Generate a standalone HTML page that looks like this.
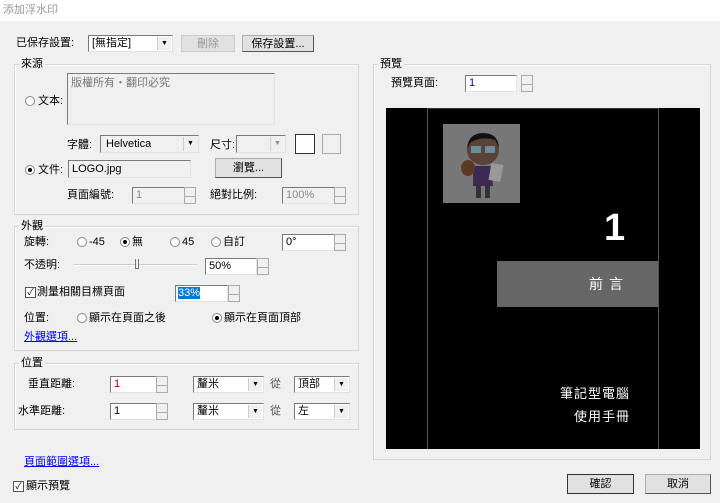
<!DOCTYPE html>
<html><head><meta charset="utf-8"><style>
*{box-sizing:border-box;margin:0;padding:0}
body{width:720px;height:503px;background:#f0f0f0;position:relative;overflow:hidden;font-family:"Liberation Sans","Noto Sans CJK TC",sans-serif;font-size:11px;color:#000}
.a{position:absolute;white-space:nowrap}
.t{position:absolute;white-space:nowrap;line-height:12px}
.grp{position:absolute;border:1px solid #d5d5d5;box-shadow:inset 1px 1px 0 #fff}
.gl{position:absolute;background:#f0f0f0;padding:0 2px;line-height:12px;top:-7px;left:4px}
.inp{position:absolute;background:#fff;border:1px solid #7a7a7a;border-right-color:#e3e3e3;border-bottom-color:#e3e3e3;padding-left:3px;line-height:14px}
.dis{background:#f0f0f0;color:#888}
.btn{position:absolute;background:#e1e1e1;border:1px solid #adadad;border-right-color:#555;border-bottom-color:#555;text-align:center;line-height:16px}
.sp{position:absolute;width:12px;border:1px solid #aaa;background:#f0f0f0}
.sp:after{content:"";position:absolute;left:0;right:0;top:50%;border-top:1px solid #aaa}
.dd{position:absolute;top:1px;right:1px;bottom:1px;width:14px;background:#f0f0f0;border-left:1px solid #ccc;font-size:7px;text-align:center;line-height:14px}
.rad{position:absolute;width:10px;height:10px;border-radius:50%;border:1px solid #888;background:#fff}
.rad.on:after{content:"";position:absolute;left:2px;top:2px;width:4px;height:4px;border-radius:50%;background:#000}
.chk{position:absolute;width:11px;height:11px;border:1px solid #555;background:#fff;font-size:9px;line-height:9px;text-align:center}
.lnk{color:#00f;text-decoration:underline}
</style></head><body>
<div class="a" style="left:0;top:0;width:720px;height:21px;background:#fff"></div>
<div class="t" style="left:3px;top:4px;color:#999">添加浮水印</div>

<div class="t" style="left:16px;top:37px">已保存設置:</div>
<div class="inp" style="left:88px;top:35px;width:85px;height:17px">[無指定]<div class="dd">▼</div></div>
<div class="btn" style="left:181px;top:35px;width:54px;height:17px;color:#999;border-color:#ccc">刪除</div>
<div class="btn" style="left:242px;top:35px;width:72px;height:17px">保存設置...</div>

<div class="grp" style="left:14px;top:64px;width:345px;height:151px"><div class="gl">來源</div></div>
<div class="rad" style="left:25px;top:96px"></div><div class="t" style="left:38px;top:95px">文本:</div>
<div class="inp dis" style="left:67px;top:73px;width:208px;height:52px;color:#777;padding-top:2px">版權所有・翻印必究</div>
<div class="t" style="left:67px;top:139px">字體:</div>
<div class="inp dis" style="left:100px;top:135px;width:99px;height:18px;color:#000;padding-left:5px;line-height:16px">Helvetica<div class="dd">▼</div></div>
<div class="t" style="left:210px;top:139px">尺寸:</div>
<div class="inp dis" style="left:236px;top:135px;width:50px;height:18px"><div class="dd">▼</div></div>
<div class="a" style="left:295px;top:134px;width:20px;height:20px;background:#fff;border:1px solid #333"></div>
<div class="a" style="left:322px;top:134px;width:19px;height:20px;border:1px solid #aaa"></div>
<div class="rad on" style="left:25px;top:165px"></div><div class="t" style="left:38px;top:164px">文件:</div>
<div class="inp dis" style="left:68px;top:160px;width:123px;height:18px;color:#000;line-height:16px">LOGO.jpg</div>
<div class="btn" style="left:215px;top:158px;width:67px;height:20px;line-height:18px">瀏覽...</div>
<div class="t" style="left:67px;top:189px">頁面編號:</div>
<div class="inp dis" style="left:132px;top:187px;width:53px;height:17px">1</div><div class="sp" style="left:184px;top:187px;height:17px"></div>
<div class="t" style="left:210px;top:189px">絕對比例:</div>
<div class="inp dis" style="left:282px;top:187px;width:53px;height:17px">100%</div><div class="sp" style="left:334px;top:187px;height:17px"></div>

<div class="grp" style="left:14px;top:226px;width:345px;height:125px"><div class="gl">外觀</div></div>
<div class="t" style="left:24px;top:236px">旋轉:</div>
<div class="rad" style="left:77px;top:237px"></div><div class="t" style="left:89px;top:236px">-45</div>
<div class="rad on" style="left:120px;top:237px"></div><div class="t" style="left:132px;top:236px">無</div>
<div class="rad" style="left:170px;top:237px"></div><div class="t" style="left:182px;top:236px">45</div>
<div class="rad" style="left:211px;top:237px"></div><div class="t" style="left:223px;top:236px">自訂</div>
<div class="inp" style="left:282px;top:234px;width:53px;height:17px">0°</div><div class="sp" style="left:334px;top:234px;height:17px"></div>
<div class="t" style="left:24px;top:259px">不透明:</div>
<div class="a" style="left:74px;top:264px;width:123px;height:2px;background:#ccc;border-bottom:1px solid #fff"></div>
<div class="a" style="left:135px;top:259px;width:4px;height:10px;background:#f0f0f0;border:1px solid #777;border-top:none"></div>
<div class="inp" style="left:205px;top:258px;width:52px;height:17px">50%</div><div class="sp" style="left:257px;top:258px;height:17px"></div>
<div class="chk" style="left:25px;top:287px">✓</div><div class="t" style="left:37px;top:286px">測量相關目標頁面</div>
<div class="inp" style="left:175px;top:285px;width:53px;height:17px;padding-left:2px"><span style="background:#0078d7;color:#fff">33%</span></div><div class="sp" style="left:228px;top:285px;height:17px"></div>
<div class="t" style="left:24px;top:312px">位置:</div>
<div class="rad" style="left:77px;top:313px"></div><div class="t" style="left:89px;top:312px">顯示在頁面之後</div>
<div class="rad on" style="left:212px;top:313px"></div><div class="t" style="left:224px;top:312px">顯示在頁面頂部</div>
<div class="t lnk" style="left:24px;top:331px">外觀選項...</div>

<div class="grp" style="left:14px;top:363px;width:345px;height:67px"><div class="gl">位置</div></div>
<div class="t" style="left:28px;top:378px">垂直距離:</div>
<div class="inp" style="left:110px;top:376px;width:47px;height:17px;color:#a00">1</div><div class="sp" style="left:156px;top:376px;height:17px"></div>
<div class="inp" style="left:193px;top:376px;width:71px;height:17px">釐米<div class="dd">▼</div></div>
<div class="t" style="left:270px;top:378px;color:#555">從</div>
<div class="inp" style="left:294px;top:376px;width:56px;height:17px">頂部<div class="dd">▼</div></div>
<div class="t" style="left:18px;top:405px">水準距離:</div>
<div class="inp" style="left:110px;top:403px;width:47px;height:17px">1</div><div class="sp" style="left:156px;top:403px;height:17px"></div>
<div class="inp" style="left:193px;top:403px;width:71px;height:17px">釐米<div class="dd">▼</div></div>
<div class="t" style="left:270px;top:405px;color:#555">從</div>
<div class="inp" style="left:294px;top:403px;width:56px;height:17px">左<div class="dd">▼</div></div>

<div class="t lnk" style="left:24px;top:456px">頁面範圍選項...</div>
<div class="chk" style="left:13px;top:481px">✓</div><div class="t" style="left:26px;top:480px">顯示預覽</div>

<div class="grp" style="left:373px;top:64px;width:338px;height:396px"><div class="gl">預覽</div></div>
<div class="t" style="left:391px;top:77px">預覽頁面:</div>
<div class="inp" style="left:465px;top:75px;width:52px;height:17px;color:#00a">1</div><div class="sp" style="left:521px;top:75px;height:17px"></div>
<div class="a" style="left:386px;top:108px;width:314px;height:341px;background:#000"></div>
<div class="a" style="left:427px;top:108px;width:232px;height:341px;border-left:1px solid #555;border-right:1px solid #555;border-top:1px solid #333"></div>
<div class="a" style="left:443px;top:124px;width:77px;height:79px;background:#777"></div>
<svg class="a" style="left:443px;top:124px" width="77" height="79" viewBox="0 0 77 79">
<ellipse cx="40" cy="26" rx="16" ry="15" fill="#5a4238"/>
<path d="M24 24 Q26 9 40 9 Q55 9 56 24 L52 16 Q40 12 28 18Z" fill="#111"/>
<rect x="28" y="22" width="10" height="7" fill="#6b8a9a"/><rect x="42" y="22" width="10" height="7" fill="#6b8a9a"/>
<path d="M30 42 L48 42 L50 62 L30 62Z" fill="#3d2a52"/>
<ellipse cx="25" cy="44" rx="7" ry="8" fill="#5a3a22"/>
<rect x="47" y="40" width="12" height="17" fill="#999" transform="rotate(10 53 48)"/>
<rect x="33" y="62" width="5" height="12" fill="#333"/><rect x="42" y="62" width="5" height="12" fill="#333"/>
</svg>
<div class="a" style="left:604px;top:208px;color:#fff;font-weight:bold;font-size:38px;line-height:40px">1</div>
<div class="a" style="left:497px;top:261px;width:161px;height:46px;background:#666"></div>
<div class="a" style="left:589px;top:276px;color:#fff;font-size:14px;letter-spacing:6px;line-height:16px">前言</div>
<div class="a" style="left:560px;top:386px;color:#fff;font-size:13px;letter-spacing:1px;line-height:16px">筆記型電腦</div>
<div class="a" style="left:574px;top:409px;color:#fff;font-size:13px;letter-spacing:1px;line-height:16px">使用手冊</div>

<div class="btn" style="left:567px;top:474px;width:67px;height:20px;line-height:18px;border:1px solid #333">確認</div>
<div class="btn" style="left:645px;top:474px;width:66px;height:20px;line-height:18px">取消</div>
</body></html>
